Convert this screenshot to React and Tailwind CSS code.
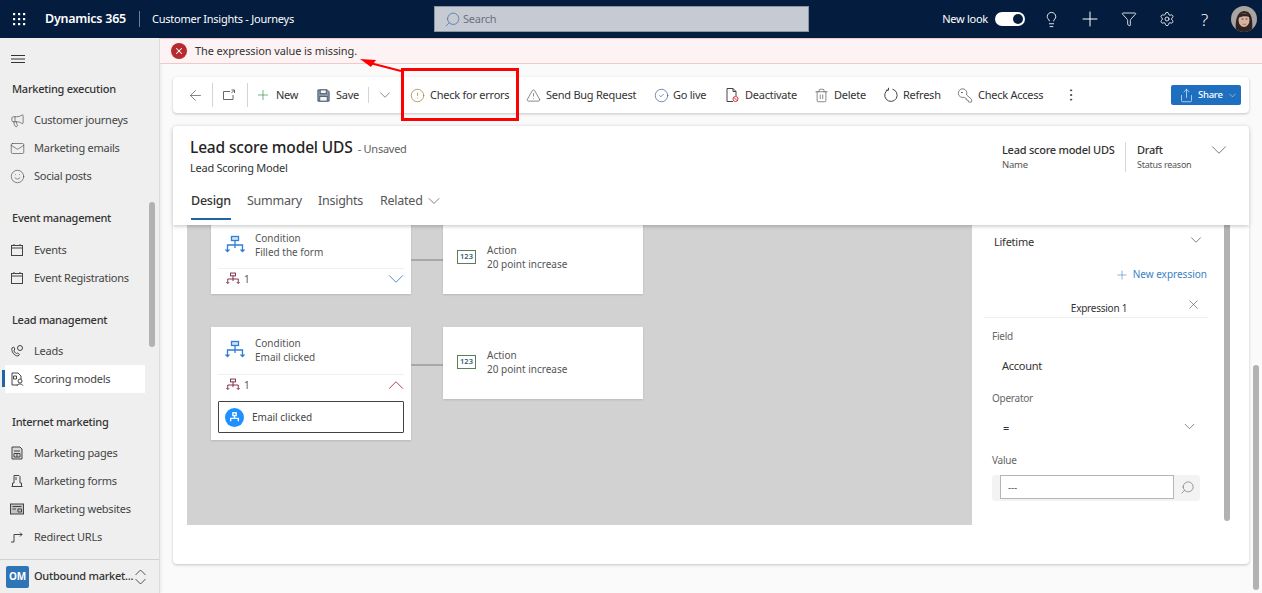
import React from "react";
import {
  ArrowLeft, Plus, ChevronDown, ChevronUp, CircleAlert, TriangleAlert, CircleCheck,
  Trash2, KeyRound, EllipsisVertical, Share, Search, X, Lightbulb, Filter, Settings,
  Mail, Smile, Megaphone,
} from "lucide-react";

const font = { fontFamily: '"Noto Sans", sans-serif' };

function Svg({ children, size = 16, className = "" }) {
  return (
    <svg width={size} height={size} viewBox="0 0 16 16" fill="none" stroke="currentColor" strokeWidth="1" className={"shrink-0 " + className}>
      {children}
    </svg>
  );
}

const CalIcon = () => (
  <Svg><rect x="2.5" y="3.5" width="11" height="10" /><path d="M2.5 6h11M5 2v2M11 2v2" /></Svg>
);
const LeadIcon = () => (
  <Svg>
    <path d="M3 5c-1 3 2 8 6 8l1.500-1.500-2-1.500-1 .5C6 10 5 8.500 5 7l1-1-1.500-2z" />
    <circle cx="11" cy="5" r="2.500" />
  </Svg>
);
const ScoreIcon = () => (
  <Svg>
    <path d="M9 14H3V2h6l3 3v3" /><path d="M4.500 5h3v3h-3z" /><circle cx="11" cy="10" r="2" /><path d="M8 14.500c.5-2 5-2 6 0" />
  </Svg>
);
const PageIcon = () => (
  <Svg><path d="M3 2h8l2 2v10H3z" fill="#d8d8d8" /><path d="M5 6h6M5 8.500h6v3.500H5zM8 8.500v3.500" /></Svg>
);
const FormIcon = () => (
  <Svg><path d="M2.500 13.500h11M3.500 13V10h1.500V2.500h5l1 1V10h1.500v3" /><path d="M7 4v3" /></Svg>
);
const SiteIcon = () => (
  <Svg><rect x="1.500" y="3" width="13" height="10" fill="#c4c4c4" /><path d="M3.500 5.500h9M9 8h3.500v3H9zM3.500 8H7" /></Svg>
);
const RedirectIcon = () => (
  <Svg><path d="M2 13h3V5.500h8M11 3.500l2 2-2 2" /></Svg>
);
const PopoutIcon = () => (
  <Svg><path d="M12 8v4.500H2.500v-8H9" /><path d="M10.500 3h3v3M13.500 3 10.500 6" /></Svg>
);
const SaveIcon = () => (
  <Svg size={15} className="text-[#4a5a6a]">
    <path d="M2 2h10l2 2v10H2z" fill="#8a9aaa" />
    <rect x="4.500" y="2" width="6.500" height="4" fill="#f4f6f8" />
    <rect x="4" y="9" width="8" height="5" fill="#f4f6f8" />
  </Svg>
);
const RefreshIcon = () => (
  <Svg className="text-[#444]">
    <path d="M5.500 2.500A6.200 6.200 0 1 0 9.500 2.200" />
    <path d="M5.500 .8v2.400H3" />
  </Svg>
);
const DeactivateIcon = () => (
  <Svg className="text-[#444]">
    <path d="M9 14.500H3V1.500h6l3 3V9" /><path d="M9 1.500v3h3" />
    <circle cx="11.500" cy="12" r="2.500" stroke="#d13438" /><path d="M10 10.500l3 3" stroke="#d13438" />
  </Svg>
);
const TreeIcon = ({ color = "#2f7ed8", small = false }) => (
  <svg width={small ? 14 : 20} height={small ? 14 : 20} viewBox="0 0 20 20" fill="none" stroke={color} strokeWidth="1.300" className="shrink-0">
    <rect x="6.500" y="1.500" width="7" height="4" fill={small ? "none" : "#cfe3f7"} />
    <path d="M10 5.500V10M2.500 16V10h15v6M10 10v3" />
    <path d="M0.500 14.500l2 2 2-2M15.500 14.500l2 2 2-2" />
  </svg>
);

const sections = [
  { title: "Marketing execution", head: "mb-[7px]", items: [["Customer journeys", <Megaphone size={15} strokeWidth={1} />], ["Marketing emails", <Mail size={15} strokeWidth={1} />], ["Social posts", <Smile size={15} strokeWidth={1} />]] },
  { title: "Event management", head: "mt-[18px] mb-2", items: [["Events", <CalIcon />], ["Event Registrations", <CalIcon />]] },
  { title: "Lead management", head: "mt-[18px] mb-[7px]", items: [["Leads", <LeadIcon />], ["Scoring models", <ScoreIcon />]] },
  { title: "Internet marketing", head: "mt-[19px] mb-[7px]", items: [["Marketing pages", <PageIcon />], ["Marketing forms", <FormIcon />], ["Marketing websites", <SiteIcon />], ["Redirect URLs", <RedirectIcon />]] },
];

function Sidebar() {
  return (
    <aside className="relative w-[160px] shrink-0 flex flex-col bg-[#efefef] border-r border-[#dcdcdc] shadow-[1px_0_3px_rgba(0,0,0,0.08)]">
      <div className="h-[41px] flex items-center pl-[10px] text-[#333]">
        <svg width="16" height="16" viewBox="0 0 16 16" stroke="currentColor" strokeWidth="1"><path d="M1 4.500h14M1 8h14M1 11.500h14" /></svg>
      </div>
      <nav className="flex-1">
        {sections.map((s) => (
          <div key={s.title}>
            <div className={"h-5 pl-3 flex items-center text-[11px] font-medium text-[#333] " + s.head}>{s.title}</div>
            {s.items.map(([label, icon]) => {
              const active = label === "Scoring models";
              return (
                <div key={label} className={"relative h-7 w-[140px] ml-[5px] flex items-center gap-[9px] pl-[4px] text-[11px] text-[#444] " + (active ? "bg-white" : "")}>
                  {active && <span className="absolute -left-[3px] top-[5px] h-[17px] w-[3px] bg-[#1f63a8]" />}
                  <span className="text-[#444] w-[16px] flex justify-center">{icon}</span>
                  <span className="whitespace-nowrap">{label}</span>
                </div>
              );
            })}
          </div>
        ))}
      </nav>
      <div className="h-[34px] border-t border-[#d2d2d2] flex items-center pl-[6px]">
        <span className="w-[23px] h-[22px] shrink-0 rounded-[2px] bg-[#2f75b5] text-white text-[10px] font-bold flex items-center justify-center">OM</span>
        <span className="ml-[5px] text-[11px] font-medium text-[#333] whitespace-nowrap">Outbound market...</span>
        <svg width="13" height="18" viewBox="0 0 13 18" fill="none" stroke="#555" strokeWidth="1" className="shrink-0 ml-auto mr-[12px]">
          <path d="M1.500 7 6.500 2l5 5M1.500 11l5 5 5-5" />
        </svg>
      </div>
      <div className="absolute left-[149px] top-[164px] w-[6px] h-[145px] rounded-full bg-[#b2b2b2]" />
    </aside>
  );
}

function TopBar() {
  return (
    <header className="relative h-[38px] bg-[#041c3e] text-white flex items-center shrink-0">
      <div className="w-[38px] flex justify-center">
        <svg width="14" height="14" viewBox="0 0 14 14" fill="white">
          {[1, 6, 11].map((x) => [1, 6, 11].map((y) => <rect key={x + "-" + y} x={x} y={y} width="2.200" height="2.200" />))}
        </svg>
      </div>
      <span className="ml-[7px] w-[94px] text-[12.500px] font-semibold whitespace-nowrap">Dynamics 365</span>
      <span className="w-px h-4 bg-[#6f7f95]" />
      <span className="ml-[12px] text-[11px] whitespace-nowrap">Customer Insights - Journeys</span>
      <div className="absolute left-[434px] top-[6px] w-[375px] h-[26px] bg-[#c6cad2] border border-[#8b95a3] flex items-center pl-[9px] gap-[2px]">
        <Search size={17} strokeWidth={1} className="text-[#3a6ea5] -scale-x-100" />
        <span className="text-[11px] text-[#6b7280]">Search</span>
      </div>
      <div className="ml-auto flex items-center">
        <span className="text-[11px] whitespace-nowrap">New look</span>
        <span className="ml-[7px] w-[30px] h-[14px] rounded-full bg-white flex items-center justify-end pr-[2px]">
          <span className="w-[10px] h-[10px] rounded-full bg-[#041c3e]" />
        </span>
        <Lightbulb size={17} strokeWidth={1.250} className="ml-[18px]" />
        <Plus size={24} strokeWidth={1} className="ml-[18px]" />
        <Filter size={16} strokeWidth={1.250} className="ml-[19px]" />
        <Settings size={16} strokeWidth={1.250} className="ml-[22px]" />
        <span className="ml-[26px] text-[17px] font-light w-[10px] leading-none">?</span>
        <svg width="26" height="26" viewBox="0 0 26 26" className="ml-[20px] mr-[5px] rounded-full">
          <rect width="26" height="26" fill="#a9a49f" />
          <path d="M5 26c-1-10 0-20 8-21 8 0 9 9 8 21z" fill="#2e2320" />
          <ellipse cx="13" cy="14" rx="5.500" ry="7" fill="#d8b3a1" />
          <path d="M7 12c1-5 8-7 12-1-4-1-8-1-12 1z" fill="#2e2320" />
          <path d="M10.500 13h2M14.500 13h2" stroke="#3a2a25" strokeWidth="0.800" />
          <path d="M11.500 18c1 .6 2.500 .6 3.500 0" stroke="#9c5a55" strokeWidth="0.800" fill="none" />
        </svg>
      </div>
    </header>
  );
}

const commands = [
  { label: "New", w: "w-[60px]", icon: <Plus size={18} strokeWidth={1} className="text-[#2f8f46]" /> },
  { label: "Save", w: "w-[53px]", icon: <SaveIcon /> },
];
const commands2 = [
  { label: "Check for errors", w: "w-[116px]", icon: <CircleAlert size={15} strokeWidth={1} className="text-[#8a6d1f]" /> },
  { label: "Send Bug Request", w: "w-[128px]", icon: <TriangleAlert size={15} strokeWidth={1} className="text-[#444]" /> },
  { label: "Go live", w: "w-[71px]", gap: "gap-[4px]", icon: <CircleCheck size={15} strokeWidth={1} className="text-[#1f4f8a]" /> },
  { label: "Deactivate", w: "w-[89px]", icon: <DeactivateIcon /> },
  { label: "Delete", w: "w-[70px]", icon: <Trash2 size={15} strokeWidth={1} className="text-[#444]" /> },
  { label: "Refresh", w: "w-[74px]", gap: "gap-[4px]", icon: <RefreshIcon /> },
  { label: "Check Access", w: "w-[106px]", icon: <KeyRound size={17} strokeWidth={1} className="text-[#444] -scale-x-100" /> },
];

function Cmd({ c }) {
  return (
    <div className={"flex items-center h-full text-[11px] text-[#333] whitespace-nowrap " + c.w + " " + (c.gap || "gap-[5px]")}>
      <span className="w-4 flex justify-center shrink-0">{c.icon}</span>
      <span>{c.label}</span>
    </div>
  );
}

function CommandBar() {
  return (
    <div className="mx-[13px] mt-[13px] h-[36px] bg-white rounded-[4px] shadow-[0_1px_3px_rgba(0,0,0,0.22)] flex items-center pl-[14px] pr-[8px]">
      <div className="w-[25px] text-[#555]"><ArrowLeft size={17} strokeWidth={1} /></div>
      <span className="w-px h-6 bg-[#d4d4d4]" />
      <div className="ml-2 w-[26px] text-[#666]"><PopoutIcon /></div>
      <span className="w-px h-6 bg-[#d4d4d4]" />
      <div className="ml-[7px] flex h-full">{commands.map((c) => <Cmd key={c.label} c={c} />)}</div>
      <span className="w-px h-4 bg-[#d4d4d4]" />
      <div className="ml-[7px] w-[33px] text-[#666]"><ChevronDown size={18} strokeWidth={1} /></div>
      <div className="flex h-full">{commands2.map((c) => <Cmd key={c.label} c={c} />)}</div>
      <EllipsisVertical size={16} strokeWidth={1.250} className="text-[#333]" />
      <div className="ml-auto w-[70px] h-5 rounded-[2px] bg-[#1e6fbf] text-white text-[9.500px] font-medium flex items-center pl-[8px] gap-[4px]">
        <Share size={15} strokeWidth={1} />
        <span>Share</span>
        <ChevronDown size={11} strokeWidth={1} />
      </div>
    </div>
  );
}

function RecordHeader() {
  return (
    <div className="relative z-10 mx-[13px] mt-[13px] h-[99px] bg-white rounded-t-[4px] shadow-[0_1px_4px_rgba(0,0,0,0.25)] pl-[17px] pt-[10px]">
      <div className="flex items-baseline text-[#242424] h-[22px]">
        <span className="text-[15.500px] tracking-[-0.15px] font-medium whitespace-nowrap">Lead score model UDS</span>
        <span className="ml-[5px] text-[11px] text-[#616161] whitespace-nowrap">- Unsaved</span>
      </div>
      <div className="text-[11px] text-[#333] mt-[2px] h-[17px]">Lead Scoring Model</div>
      <div className="flex items-start mt-[15px] text-[12.500px] text-[#555]">
        <div className="w-[57px] pl-[1px]">
          <span className="block w-fit text-[#333] font-medium pb-[7px] border-b-2 border-[#1f63a8] whitespace-nowrap">Design</span>
        </div>
        <span className="w-[71px]">Summary</span>
        <span className="w-[62px]">Insights</span>
        <span className="flex items-center h-[18px] gap-[1px]">Related <ChevronDown size={20} strokeWidth={1} className="text-[#666]" /></span>
      </div>
      <div className="absolute right-0 top-[16px] w-[247px] flex text-[#333]">
        <div className="w-[123px]">
          <div className="text-[11px] font-medium leading-4 whitespace-nowrap">Lead score model UDS</div>
          <div className="text-[9.500px] text-[#555] leading-[13px] whitespace-nowrap">Name</div>
        </div>
        <div className="w-px h-[30px] bg-[#d8d8d8]" />
        <div className="pl-[11px]">
          <div className="text-[11px] font-medium leading-4">Draft</div>
          <div className="text-[9px] text-[#555] leading-[13px] whitespace-nowrap">Status reason</div>
        </div>
        <ChevronDown size={26} strokeWidth={0.8} className="absolute right-[17px] -top-[5px] text-[#666]" />
      </div>
    </div>
  );
}

function ConditionCard({ title, open }) {
  return (
    <div className="w-[200px] bg-white shadow-[0_1px_2px_rgba(0,0,0,0.12)] px-[7px] shrink-0 tracking-normal">
      <div className={"h-[48px] flex items-center border-b border-[#f0f0f0] pl-[7px] gap-[10px] " + (open ? "pb-[2px]" : "")}>
        <TreeIcon />
        <div className="text-[10px] leading-[14px] text-[#555]">
          <div>Condition</div>
          <div className="whitespace-nowrap">{title}</div>
        </div>
      </div>
      <div className={"h-[20px] flex items-center pl-[8px] text-[10px] text-[#555] " + (open ? "" : "mb-[5px]")}>
        <TreeIcon color="#7a1f3d" small />
        <span className="ml-[4px]">1</span>
        <span className="ml-auto -mr-[5px]">
          {open ? <ChevronUp size={26} strokeWidth={0.8} className="text-[#a4262c]" /> : <ChevronDown size={26} strokeWidth={0.8} className="text-[#2f7ed8]" />}
        </span>
      </div>
      {open && (
        <div className="mt-[6px] mb-[7px] h-[32px] border border-[#444] rounded-[1px] flex items-center pl-[6px] gap-[8px]">
          <span className="w-[19px] h-[19px] rounded-full bg-[#1e90ff] flex items-center justify-center">
            <svg width="11" height="11" viewBox="0 0 20 20" fill="none" stroke="white" strokeWidth="2.500"><rect x="7" y="1.500" width="6" height="5" /><path d="M10 6.500v5M3 17v-5.500h14V17" /></svg>
          </span>
          <span className="text-[10px] text-[#444]">{title}</span>
        </div>
      )}
    </div>
  );
}

function ActionCard({ className = "" }) {
  return (
    <div className={"w-[200px] bg-white shadow-[0_1px_2px_rgba(0,0,0,0.12)] flex items-center pl-[14px] pb-[2px] gap-[11px] shrink-0 tracking-normal " + className}>
      <span className="w-[19px] h-[14px] border border-[#5b7f5a] text-[7.500px] font-semibold text-[#2f5e78] flex items-center justify-center">123</span>
      <div className="text-[10px] leading-[14px] text-[#555]">
        <div>Action</div>
        <div className="whitespace-nowrap">20 point increase</div>
      </div>
    </div>
  );
}

function Canvas() {
  return (
    <div className="w-[785px] h-[300px] bg-[#d2d2d2] pl-6 overflow-hidden shrink-0">
      <div className="flex items-start -mt-[4px]">
        <ConditionCard title="Filled the form" />
        <span className="w-8 h-[2px] mt-[38px] bg-[#a8a8a8]" />
        <ActionCard className="h-[73px]" />
      </div>
      <div className="flex items-start mt-[33px]">
        <ConditionCard title="Email clicked" open />
        <span className="w-8 h-[2px] mt-[37px] bg-[#a8a8a8]" />
        <ActionCard className="h-[72px]" />
      </div>
    </div>
  );
}

function Label({ children, className = "" }) {
  return <div className={"pl-[20px] text-[10px] text-[#666] " + className}>{children}</div>;
}

function RightPanel() {
  return (
    <div className="relative flex-1 h-[300px] text-[#333]">
      <div className="pl-[22px] pr-[44px] pt-[7px] h-[20px] box-content flex items-center justify-between text-[11px]">
        <span>Lifetime</span>
        <ChevronDown size={18} strokeWidth={1} className="-mt-[4px] text-[#555]" />
      </div>
      <div className="mt-[15px] pr-[42px] flex justify-end items-center gap-[4px] text-[10px] tracking-normal text-[#3b7fc4] whitespace-nowrap">
        <Plus size={14} strokeWidth={1} />
        <span>New expression</span>
      </div>
      <div className="relative mt-[18px] ml-[12px] w-[224px] h-[18px] border-b border-[#eeeeee] text-[10px] text-center pl-[6px] leading-[16px]">
        Expression 1
        <X size={15} strokeWidth={1} className="absolute right-[7px] -top-[3px] text-[#555]" />
      </div>
      <Label className="mt-[11px]">Field</Label>
      <div className="pl-[30px] mt-[14px] text-[11px] leading-4">Account</div>
      <Label className="mt-[17px]">Operator</Label>
      <div className="relative pl-[31px] mt-[14px] text-[11px] leading-4 w-[228px]">
        =
        <ChevronDown size={17} strokeWidth={1} className="absolute right-[2px] -top-[2px] text-[#555]" />
      </div>
      <Label className="mt-[17px]">Value</Label>
      <div className="ml-[20px] mt-[7px] w-[208px] h-[26px] bg-[#f3f3f3] rounded-[3px] flex pl-[8px]">
        <div className="w-[174px] h-[24px] bg-white border border-[#b5b5b5] pl-[7px] text-[10px] text-[#666] leading-[22px]">---</div>
        <Search size={15} strokeWidth={1} className="ml-[6px] mt-[5px] -scale-x-100 text-[#666]" />
      </div>
      <div className="absolute left-[252px] top-0 w-[6px] h-[296px] rounded-b-full bg-[#b2b2b2]" />
    </div>
  );
}

function Annotation() {
  return (
    <>
      <div className="absolute left-[401px] top-[68px] w-[118px] h-[53px] border-[3px] border-[#ff0000]" />
      <svg className="absolute left-[355px] top-[55px]" width="50" height="24" viewBox="0 0 50 24" fill="none">
        <path d="M46 16 15 8" stroke="#ff0000" strokeWidth="2" />
        <path d="M5 4l16 1-5 7z" fill="#ff0000" />
      </svg>
    </>
  );
}

export default function App() {
  return (
    <div style={font} className="relative w-[1262px] h-[593px] overflow-hidden flex flex-col bg-[#fafafa] tracking-[-0.25px]">
      <TopBar />
      <div className="flex flex-1 min-h-0">
        <Sidebar />
        <main className="relative flex-1 min-w-0">
          <div className="h-[26px] bg-[#fdf3f4] border-t border-b border-[#f0c8c8] flex items-center pl-[11px] gap-[8px]">
            <span className="w-4 h-4 rounded-full bg-[#b52b2f] text-white flex items-center justify-center">
              <X size={10} strokeWidth={2.500} />
            </span>
            <span className="text-[11px] tracking-[-0.1px] text-[#333]">The expression value is missing.</span>
          </div>
          <CommandBar />
          <RecordHeader />
          <div className="mx-[13px] h-[339px] bg-white rounded-b-[4px] shadow-[0_1px_3px_rgba(0,0,0,0.22)] pl-[14px] flex items-start">
            <Canvas />
            <RightPanel />
          </div>
          <div className="absolute right-[3px] top-[327px] w-[6px] h-[225px] rounded-full bg-[#b2b2b2]" />
        </main>
      </div>
      <Annotation />
    </div>
  );
}
